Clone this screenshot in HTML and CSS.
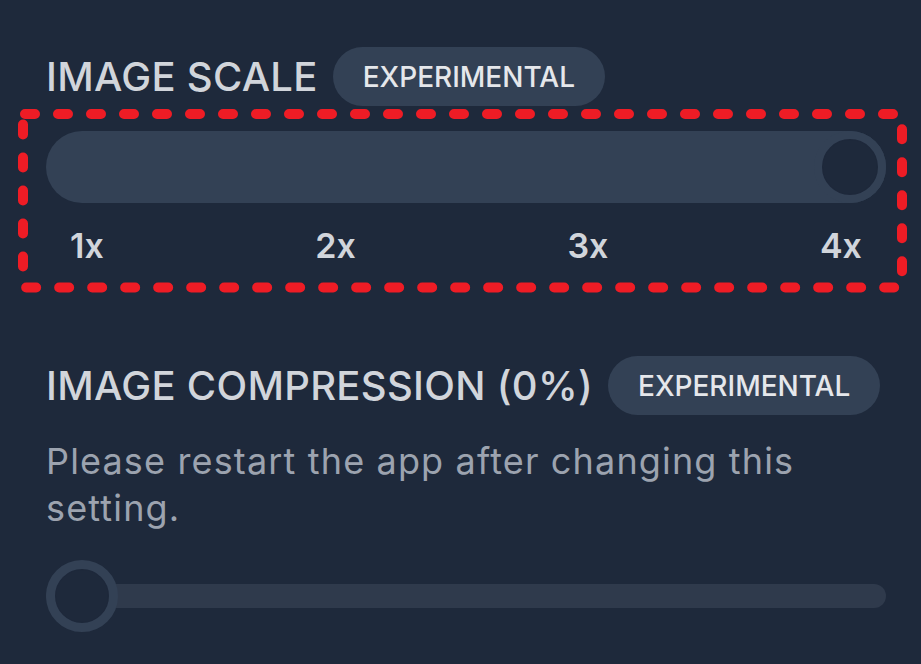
FILE: index.html
```html
<!DOCTYPE html>
<html>
<head>
<meta charset="utf-8">
<link rel="stylesheet" href="styles.css">
</head>
<body>
<div class="panel">
  <section class="setting">
    <div class="heading">
      <h2 class="title">IMAGE SCALE</h2>
      <span class="badge">EXPERIMENTAL</span>
    </div>
    <div class="range range-big">
      <span class="thumb"></span>
    </div>
    <div class="ticks">
      <span>1x</span><span>2x</span><span>3x</span><span>4x</span>
    </div>
  </section>
  <section class="setting second">
    <div class="heading">
      <h2 class="title">IMAGE COMPRESSION (0%)</h2>
      <span class="badge">EXPERIMENTAL</span>
    </div>
    <p class="note">Please restart the app after changing this setting.</p>
    <div class="range-small">
      <span class="thumb small-thumb"></span>
      <div class="track"></div>
    </div>
  </section>
</div>
<svg class="annotation" width="921" height="664" viewBox="0 0 921 664">
  <rect x="23" y="114" width="879" height="173.5" rx="2" fill="none" stroke="#ee1c25" stroke-width="10" stroke-linecap="round" stroke-dasharray="10 23"/>
</svg>
</body>
</html>
```
FILE: styles.css
```css
html, body {
  margin: 0;
  padding: 0;
  background: #1e293b;
  width: 921px;
  height: 664px;
  overflow: hidden;
  font-family: "Inter", "Open Sans", sans-serif;
}
.panel {
  padding: 47px 35px 0 46px;
}
.heading {
  display: flex;
  align-items: center;
  gap: 15px;
  height: 59px;
}
.title {
  margin: 0;
  font-size: 40px;
  font-weight: 500;
  letter-spacing: 0.3px;
  line-height: 1;
  color: #d1d5db;
}
.badge {
  display: flex;
  align-items: center;
  height: 59px;
  padding: 0 30px;
  border-radius: 999px;
  background: #334155;
  color: #e5e7eb;
  font-size: 28px;
  font-weight: 500;
}
.range-big {
  margin-top: 25px;
  height: 72px;
  border-radius: 36px;
  background: #334155;
  display: flex;
  justify-content: flex-end;
}
.thumb {
  box-sizing: border-box;
  width: 72px;
  height: 72px;
  border-radius: 50%;
  border: 8px solid #334155;
  background: #1e293b;
  box-shadow: 0 0 0 1px rgba(30, 41, 59, 0.25) inset;
}
.ticks {
  display: flex;
  justify-content: space-between;
  padding: 0 24px;
  margin-top: 25px;
  font-size: 34px;
  font-weight: 600;
  line-height: 36px;
  color: #d1d5db;
}
.second {
  margin-top: 92px;
}
.note {
  margin: 23px 0 0;
  font-size: 36px;
  letter-spacing: 1.15px;
  line-height: 47px;
  color: #9ca3af;
}
.range-small {
  position: relative;
  margin-top: 28px;
  height: 72px;
  display: flex;
  align-items: center;
}
.track {
  flex: 1;
  height: 24px;
  border-radius: 12px;
  background: #2f3a4c;
}
.small-thumb {
  position: absolute;
  left: 0;
  top: 0;
  border-width: 9px;
}
.annotation {
  position: absolute;
  left: 0;
  top: 0;
  pointer-events: none;
}
```
